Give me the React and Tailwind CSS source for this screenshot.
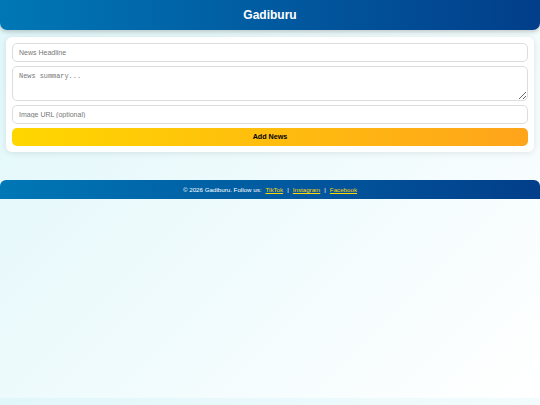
import React from 'react';

const links = ['TikTok', 'Instagram', 'Facebook'];

export default function App() {
  return (
    <div
      className="min-h-[405px] bg-[linear-gradient(135deg,#e0f7fa,#ffffff)] bg-[length:100%_398px] bg-repeat-y"
      style={{ fontFamily: '"Liberation Sans", Arial, sans-serif' }}
    >
      <header className="h-[30px] flex items-center justify-center rounded-b-[7px] bg-[linear-gradient(90deg,#0077b6,#023e8a)] shadow-[0_2px_4px_rgba(0,0,0,0.2)]">
        <h1 className="text-[12px] font-bold text-white leading-none">Gadiburu</h1>
      </header>

      <main className="mx-[6px] mt-[7px] bg-white rounded-[6px] shadow-[0_1px_6px_rgba(0,0,0,0.1)] p-[6px] flex flex-col gap-[4px]">
        <input
          type="text"
          placeholder="News Headline"
          className="h-[19px] w-full border border-[#dddddd] rounded-[5px] px-[6px] text-[7px] placeholder:text-[#777777] outline-none"
        />
        <textarea
          placeholder="News summary..."
          className="h-[35px] w-full border border-[#dddddd] rounded-[5px] px-[6px] py-[4px] text-[6.9px] placeholder:text-[#777777] outline-none block"
          style={{ fontFamily: '"Liberation Mono", monospace' }}
        />
        <input
          type="text"
          placeholder="Image URL (optional)"
          className="h-[19px] w-full border border-[#dddddd] rounded-[5px] px-[6px] text-[7px] placeholder:text-[#777777] outline-none"
        />
        <button className="h-[18px] w-full rounded-[5px] bg-[linear-gradient(90deg,#ffd700,#ffa41b)] text-[7.2px] font-bold text-black">
          Add News
        </button>
      </main>

      <footer className="mt-[28px] h-[19px] flex items-center justify-center rounded-t-[6px] bg-[linear-gradient(90deg,#0077b6,#023e8a)] text-white text-[6.2px]">
        <span>© 2026 Gadiburu. Follow us:</span>
        {links.map((l, i) => (
          <React.Fragment key={l}>
            {i > 0 && <span className="mx-[4px]">|</span>}
            <a href="#" className={`text-[#ffd700] underline ${i === 0 ? 'ml-[4px]' : ''}`}>
              {l}
            </a>
          </React.Fragment>
        ))}
      </footer>
    </div>
  );
}
